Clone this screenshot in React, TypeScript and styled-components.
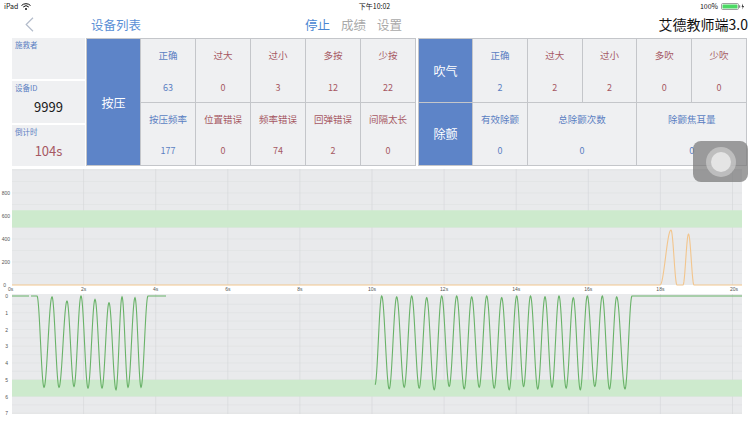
import styled, { createGlobalStyle } from 'styled-components';

const GlobalStyle = createGlobalStyle`
	html, body {
		margin: 0;
		padding: 0;
		background: #fff;
	}
	body {
		font-family: "Noto Sans CJK SC", "Noto Sans", sans-serif;
		width: 750px;
		height: 422px;
		overflow: hidden;
	}
`

type Tone = 'blue' | 'red' | 'dark'

const toneColor = (t: Tone) => (t === 'blue' ? '#5b7fc2' : t === 'red' ? '#a65863' : '#1a1a1a')

const Screen = styled.div`
	position: relative;
	width: 750px;
	height: 422px;
	display: flex;
	flex-direction: column;
`

const StatusBar = styled.div`
	height: 12px;
	display: grid;
	grid-template-columns: 1fr auto 1fr;
	align-items: center;
	padding: 0 5px 0 4px;
	font-size: 7px;
	color: #111;
`

const StatusLeft = styled.div`
	display: flex;
	align-items: center;
	gap: 3px;
`

const StatusRight = styled.div`
	display: flex;
	align-items: center;
	justify-content: flex-end;
	gap: 3px;
`

const NavBar = styled.div`
	height: 24px;
	display: flex;
	align-items: center;
	padding: 0 2px 0 25px;
`

const NavTitle = styled.span`
	margin-left: 57px;
	font-size: 12.5px;
	color: #5a8fd6;
`

const Tabs = styled.div`
	margin-left: 164px;
	display: flex;
	gap: 11px;
`

const Tab = styled.span<{ $active?: boolean }>`
	font-size: 12.5px;
	color: ${p => (p.$active ? '#4a86d2' : '#a9a9a9')};
`

const AppTitle = styled.span`
	margin-left: auto;
	font-size: 14px;
	color: #111;
`

const Board = styled.div`
	margin-top: 2px;
	height: 128px;
	display: flex;
	gap: 1px;
	padding-left: 12px;
`

const InfoCol = styled.div`
	width: 73px;
	display: flex;
	flex-direction: column;
	gap: 2px;
`

const InfoCell = styled.div`
	flex: 1;
	background: #eff0f2;
	display: flex;
	flex-direction: column;
	padding: 2px 3px 0;
`

const InfoLabel = styled.span`
	font-size: 7.5px;
	line-height: 10px;
	color: #5b7fc2;
`

const InfoValue = styled.span<{ $tone: Tone }>`
	margin-top: 6px;
	text-align: center;
	font-size: 13px;
	line-height: 16px;
	color: ${p => toneColor(p.$tone)};
`

const Group = styled.div<{ $width: number }>`
	width: ${p => p.$width}px;
	display: grid;
	grid-template-columns: 53px repeat(5, 1fr);
	grid-template-rows: 1fr 1fr;
	gap: 1px;
	padding: 1px;
	background: #c4c6ca;
`

const BlowGroup = styled(Group)`
	margin-left: 1px;
`

const Header = styled.div<{ $rows?: number }>`
	grid-row: span ${p => p.$rows ?? 1};
	background: #5d84c8;
	color: #fff;
	font-size: 12px;
	display: flex;
	align-items: center;
	justify-content: center;
`

const StatCell = styled.div<{ $span?: number }>`
	grid-column: span ${p => p.$span ?? 1};
	background: #eff0f2;
	display: flex;
	flex-direction: column;
	align-items: center;
	justify-content: space-between;
	padding: 10px 0 8px;
`

const StatLabel = styled.span<{ $tone: Tone }>`
	font-size: 9.5px;
	line-height: 12px;
	color: ${p => toneColor(p.$tone)};
`

const StatValue = styled.span<{ $tone: Tone }>`
	font-size: 9px;
	line-height: 12px;
	color: ${p => toneColor(p.$tone)};
`

const Charts = styled.div`
	margin-top: 2px;
	display: flex;
	flex-direction: column;
`

const ChartSvg = styled.svg`
	display: block;
	font-family: "Liberation Sans", sans-serif;
`

const AssistiveTouch = styled.div`
	position: absolute;
	left: 693px;
	top: 141px;
	width: 55px;
	height: 41px;
	border-radius: 8px;
	background: rgba(120, 120, 120, 0.72);
	display: flex;
	align-items: center;
	justify-content: center;
`

const TouchRing = styled.div`
	width: 30px;
	height: 30px;
	border-radius: 50%;
	background: rgba(205, 205, 205, 0.7);
	display: flex;
	align-items: center;
	justify-content: center;
`

const TouchDot = styled.div`
	width: 20px;
	height: 20px;
	border-radius: 50%;
	background: #e4e4e4;
`

type Pt = [number, number]

// 0s..20s
const xAt = (t: number) => 11.5 + t * 36.05

function wavePath(segments: Pt[][], toY: (v: number) => number) {
	return segments.map(pts => {
		let d = `M${pts[0][0]},${toY(pts[0][1]).toFixed(2)}`
		for (let i = 1; i < pts.length; i++) {
			const [x0, v0] = pts[i - 1]
			const [x1, v1] = pts[i]
			if (v0 === v1) {
				d += ` L${x1},${toY(v1).toFixed(2)}`
				continue
			}
			const steps = Math.max(4, Math.round((x1 - x0) * 3))
			for (let s = 1; s <= steps; s++) {
				const t = s / steps
				const k = (1 - Math.cos(Math.PI * t)) / 2
				d += ` L${(x0 + (x1 - x0) * t).toFixed(2)},${toY(v0 + (v1 - v0) * k).toFixed(2)}`
			}
		}
		return d
	}).join(' ')
}

function oscillate(peaks: number[], troughVals: number[], peakVals: number[]): Pt[] {
	const pts: Pt[] = []
	peaks.forEach((p, i) => {
		pts.push([p, peakVals[i % peakVals.length]])
		const next = peaks[i + 1]
		if (next !== undefined) pts.push([(p + next) / 2, troughVals[i % troughVals.length]])
	})
	return pts
}

const seg2Peaks = [381.7, 396.7, 411.7, 426.7, 441.7, 456.7, 471.7, 486.7, 501.7, 516.7, 530.5, 545, 559, 573.3, 587.3, 602.3, 616.7]

const greenSegments: Pt[][] = [
	[[12, 0], [29, 0]],
	[[31, 0], [37, 0], [44, 5.45], [52, 0.05], [59, 5.45], [67, 0.3], [74, 5.4], [81, 0], [88, 5.5], [95, 0.2],
	[102, 5.5], [109, 0.4], [116, 5.6], [122, 0.05], [128, 5.45], [135, 0.1], [141, 5.45], [148, 0], [166, 0]],
	[[375, 5.3], ...oscillate(seg2Peaks, [5.55, 5.45, 5.5, 5.6, 5.4], [0, 0.05, 0, 0.1, 0]), [625, 5.55], [632, 0], [742, 0]],
]

const orangeSegments: Pt[][] = [
	[[12, 0], [660, 0], [671, 478], [677, 0], [683, 0], [688.5, 443], [694, 0], [742, 0]],
]

function BlowChart() {
	const toY = (v: number) => 117 - v * 0.115
	const grid = Array.from({ length: 10 }, (_, i) => toY((i + 1) * 100))
	return (
		<ChartSvg width={750} height={124}>
			<rect x={12} y={1} width={730} height={116} fill="#e9eaec" />
			{grid.map(y => <line key={y} x1={12} x2={742} y1={y} y2={y} stroke="#dfe0e3" strokeWidth={0.6} />)}
			{Array.from({ length: 10 }, (_, i) => xAt((i + 1) * 2)).map(x =>
				<line key={x} x1={x} x2={x} y1={1} y2={117} stroke="#d4d5d8" strokeWidth={0.6} />)}
			<rect x={12} y={toY(650)} width={730} height={150 * 0.115} fill="#cdeacd" />
			{[0, 200, 400, 600, 800].map(v =>
				<text key={v} x={v === 0 ? 6 : 10} y={toY(v) + 2} fontSize={5} fill="#555" textAnchor="end">{v}</text>)}
			{Array.from({ length: 11 }, (_, i) => i * 2).map(t =>
				<text key={t} x={t === 20 ? 738 : t === 0 ? 8 : xAt(t)} y={122.5} fontSize={5} fill="#555"
					textAnchor={t === 20 ? 'end' : t === 0 ? 'start' : 'middle'}>{t}s</text>)}
			<path d={wavePath(orangeSegments, toY)} fill="none" stroke="#f2c58d" strokeWidth={1.1} />
		</ChartSvg>
	)
}

function PressChart() {
	const toY = (v: number) => 4 + v * 16.75
	const grid = Array.from({ length: 14 }, (_, i) => toY((i + 1) * 0.5))
	return (
		<ChartSvg width={750} height={130}>
			<rect x={12} y={2} width={730} height={120} fill="#e9eaec" />
			{grid.map(y => <line key={y} x1={12} x2={742} y1={y} y2={y} stroke="#dfe0e3" strokeWidth={0.6} />)}
			{Array.from({ length: 10 }, (_, i) => xAt((i + 1) * 2)).map(x =>
				<line key={x} x1={x} x2={x} y1={2} y2={122} stroke="#d4d5d8" strokeWidth={0.6} />)}
			<rect x={12} y={toY(5)} width={730} height={16.75} fill="#cdeacd" />
			{[0, 1, 2, 3, 4, 5, 6, 7].map(v =>
				<text key={v} x={8} y={toY(v) + 2} fontSize={5} fill="#555" textAnchor="end">{v}</text>)}
			<path d={wavePath(greenSegments, toY)} fill="none" stroke="#69b268" strokeWidth={1.1} />
		</ChartSvg>
	)
}

const pressRows: { label: string; value: string; tone: Tone }[][] = [
	[
		{ label: '正确', value: '63', tone: 'blue' },
		{ label: '过大', value: '0', tone: 'red' },
		{ label: '过小', value: '3', tone: 'red' },
		{ label: '多按', value: '12', tone: 'red' },
		{ label: '少按', value: '22', tone: 'red' },
	],
	[
		{ label: '按压频率', value: '177', tone: 'blue' },
		{ label: '位置错误', value: '0', tone: 'red' },
		{ label: '频率错误', value: '74', tone: 'red' },
		{ label: '回弹错误', value: '2', tone: 'red' },
		{ label: '间隔太长', value: '0', tone: 'red' },
	],
]

const blowRow: { label: string; value: string; tone: Tone }[] = [
	{ label: '正确', value: '2', tone: 'blue' },
	{ label: '过大', value: '2', tone: 'red' },
	{ label: '过小', value: '2', tone: 'red' },
	{ label: '多吹', value: '0', tone: 'red' },
	{ label: '少吹', value: '0', tone: 'red' },
]

const shockRow: { label: string; value: string; span: number }[] = [
	{ label: '有效除颤', value: '0', span: 1 },
	{ label: '总除颤次数', value: '0', span: 2 },
	{ label: '除颤焦耳量', value: '0', span: 2 },
]

function App() {
	return (
		<Screen>
			<GlobalStyle />
			<StatusBar>
				<StatusLeft>
					<span>iPad</span>
					<svg width="10" height="7" viewBox="0 0 10 7">
						<path d="M0.5 2.5 A6.5 6.5 0 0 1 9.5 2.5" fill="none" stroke="#111" strokeWidth="1" />
						<path d="M2.2 4 A4 4 0 0 1 7.8 4" fill="none" stroke="#111" strokeWidth="1" />
						<circle cx="5" cy="6" r="1" fill="#111" />
					</svg>
				</StatusLeft>
				<span>下午10:02</span>
				<StatusRight>
					<span>100%</span>
					<svg width="24" height="7" viewBox="0 0 24 7">
						<rect x="0.5" y="0.5" width="17" height="6" rx="1.2" fill="none" stroke="#888" strokeWidth="0.8" />
						<rect x="1.5" y="1.5" width="15" height="4" rx="0.6" fill="#4cd964" />
						<rect x="18" y="2.3" width="1.2" height="2.4" fill="#888" />
						<path d="M22 0.5 L20.6 3.7 L21.8 3.7 L21.2 6.5 L23 2.9 L21.8 2.9 Z" fill="#111" />
					</svg>
				</StatusRight>
			</StatusBar>

			<NavBar>
				<svg width="9" height="15" viewBox="0 0 9 15">
					<polyline points="8,0.8 1.2,7.5 8,14.2" fill="none" stroke="#b3bccb" strokeWidth="1.2" />
				</svg>
				<NavTitle>设备列表</NavTitle>
				<Tabs>
					<Tab $active>停止</Tab>
					<Tab>成绩</Tab>
					<Tab>设置</Tab>
				</Tabs>
				<AppTitle>艾德教师端3.0</AppTitle>
			</NavBar>

			<Board>
				<InfoCol>
					<InfoCell>
						<InfoLabel>施救者</InfoLabel>
					</InfoCell>
					<InfoCell>
						<InfoLabel>设备ID</InfoLabel>
						<InfoValue $tone="dark">9999</InfoValue>
					</InfoCell>
					<InfoCell>
						<InfoLabel>倒计时</InfoLabel>
						<InfoValue $tone="red">104s</InfoValue>
					</InfoCell>
				</InfoCol>

				<Group $width={328}>
					<Header $rows={2}>按压</Header>
					{pressRows.flat().map((c, i) => (
						<StatCell key={i}>
							<StatLabel $tone={c.tone}>{c.label}</StatLabel>
							<StatValue $tone={c.tone}>{c.value}</StatValue>
						</StatCell>
					))}
				</Group>

				<BlowGroup $width={327}>
					<Header>吹气</Header>
					{blowRow.map((c, i) => (
						<StatCell key={i}>
							<StatLabel $tone={c.tone}>{c.label}</StatLabel>
							<StatValue $tone={c.tone}>{c.value}</StatValue>
						</StatCell>
					))}
					<Header>除颤</Header>
					{shockRow.map((c, i) => (
						<StatCell key={i} $span={c.span}>
							<StatLabel $tone="blue">{c.label}</StatLabel>
							<StatValue $tone="blue">{c.value}</StatValue>
						</StatCell>
					))}
				</BlowGroup>
			</Board>

			<Charts>
				<BlowChart />
				<PressChart />
			</Charts>

			<AssistiveTouch>
				<TouchRing>
					<TouchDot />
				</TouchRing>
			</AssistiveTouch>
		</Screen>
	)
}

export default App
